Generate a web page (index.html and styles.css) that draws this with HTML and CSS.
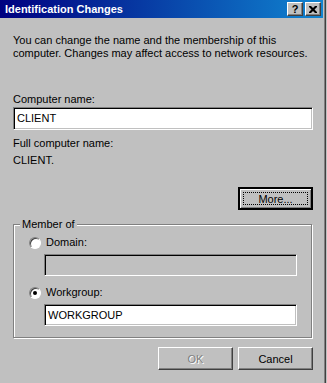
FILE: index.html
```html
<!DOCTYPE html>
<html lang="en">
<head>
    <meta charset="UTF-8">
    <title>Identification Changes</title>
    <link rel="stylesheet" href="styles.css">
</head>
<body>
<div class="window">
    <div class="titlebar">
        <span class="title">Identification Changes</span>
        <div class="caption-buttons">
            <span class="cap-btn help">?</span>
            <span class="cap-btn close">
                <svg width="8" height="7" viewBox="0 0 8 7"><path d="M0 0h2l2 2 2-2h2v1l-2.5 2.5L8 6v1H6L4 5 2 7H0V6l2.5-2.5L0 1z" fill="#000"/></svg>
            </span>
        </div>
    </div>
    <div class="content">
        <p class="intro">You can change the name and the membership of this computer. Changes may affect access to network resources.</p>

        <p class="label name-label">Computer name:</p>
        <div class="edit">CLIENT</div>

        <p class="label full-label">Full computer name:</p>
        <p class="label full-value">CLIENT.</p>

        <div class="more-row">
            <button class="btn default"><span class="focus">More...</span></button>
        </div>

        <div class="group">
            <span class="group-title">Member of</span>
            <div class="option domain">
                <span class="radio"></span>
                <span>Domain:</span>
            </div>
            <div class="edit sub disabled"></div>
            <div class="option workgroup">
                <span class="radio checked"></span>
                <span>Workgroup:</span>
            </div>
            <div class="edit sub">WORKGROUP</div>
        </div>

        <div class="actions">
            <button class="btn" disabled>OK</button>
            <button class="btn">Cancel</button>
        </div>
    </div>
</div>
</body>
</html>
```

FILE: styles.css
```css
* {
    margin: 0;
    padding: 0;
    box-sizing: border-box;
}
body {
    background-color: #c0c0c0;
    font-family: "Liberation Sans", Arial, sans-serif;
    font-size: 11px;
    line-height: 13px;
    color: #000;
    overflow: hidden;
}
.window {
    width: 326px;
    height: 383px;
    padding-right: 3px;
    box-shadow: inset -1px 0 #404040, inset -2px 0 #808080;
}
.titlebar {
    height: 18px;
    margin-bottom: 1px;
    background: linear-gradient(to right, #000080, #1084d0);
    display: flex;
    align-items: center;
    justify-content: space-between;
    padding: 0 2px 0 5px;
}
.title {
    color: #fff;
    font-weight: bold;
    font-size: 11px;
}
.caption-buttons {
    display: flex;
    gap: 2px;
}
.cap-btn {
    width: 16px;
    height: 14px;
    background-color: #c0c0c0;
    border: 1px solid;
    border-color: #fff #404040 #404040 #fff;
    box-shadow: inset -1px -1px #808080;
    display: flex;
    align-items: center;
    justify-content: center;
    font-weight: bold;
    font-size: 11px;
}
.content {
    padding: 15px 10px 0 13px;
}
.intro {
    width: 300px;
}
.name-label {
    margin-top: 33px;
}
.edit {
    height: 23px;
    margin-top: 1px;
    background-color: #fff;
    border: 1px solid;
    border-color: #808080 #fff #fff #808080;
    box-shadow: inset 1px 1px #000, inset -1px -1px #c0c0c0;
    padding: 4px 3px;
    line-height: 13px;
}
.full-label {
    margin-top: 7px;
}
.full-value {
    margin-top: 4px;
}
.more-row {
    display: flex;
    justify-content: flex-end;
    margin-top: 20px;
}
.btn {
    width: 75px;
    height: 23px;
    background-color: #c0c0c0;
    border: 1px solid;
    border-color: #fff #404040 #404040 #fff;
    box-shadow: inset -1px -1px #808080;
    font-family: "Liberation Sans", Arial, sans-serif;
    font-size: 11px;
    color: #000;
}
.btn.default {
    border: 2px solid;
    border-color: #000;
    box-shadow: inset 1px 1px #fff, inset -1px -1px #808080;
    padding: 3px;
}
.btn.default .focus {
    display: block;
    height: 100%;
    border: 1px dotted #000;
    line-height: 13px;
}
.btn:disabled {
    color: #808080;
    text-shadow: 1px 1px #fff;
}
.group {
    margin-top: 14px;
    border: 1px solid #808080;
    box-shadow: inset 1px 1px #fff, 1px 1px #fff;
    width: 299px;
    padding: 0 14px 11px 15px;
}
.group-title {
    display: block;
    width: fit-content;
    margin: -7px 0 0 -9px;
    padding: 0 2px;
    background-color: #c0c0c0;
}
.option {
    display: flex;
    align-items: center;
    gap: 5px;
    height: 13px;
}
.option.domain {
    margin-top: 5px;
}
.option.workgroup {
    margin-top: 10px;
}
.radio {
    width: 12px;
    height: 12px;
    border-radius: 50%;
    background-color: #fff;
    border: 1px solid;
    border-color: #808080 #fff #fff #808080;
    box-shadow: inset 1px 1px #404040;
    position: relative;
}
.radio.checked::after {
    content: "";
    position: absolute;
    left: 3px;
    top: 3px;
    width: 4px;
    height: 4px;
    border-radius: 50%;
    background-color: #000;
}
.edit.sub {
    margin: 5px 0 0 15px;
    width: 253px;
    height: 22px;
}
.edit.sub.disabled {
    background-color: #c0c0c0;
}
.actions {
    display: flex;
    justify-content: flex-end;
    gap: 5px;
    margin-top: 9px;
    width: 300px;
}
```
